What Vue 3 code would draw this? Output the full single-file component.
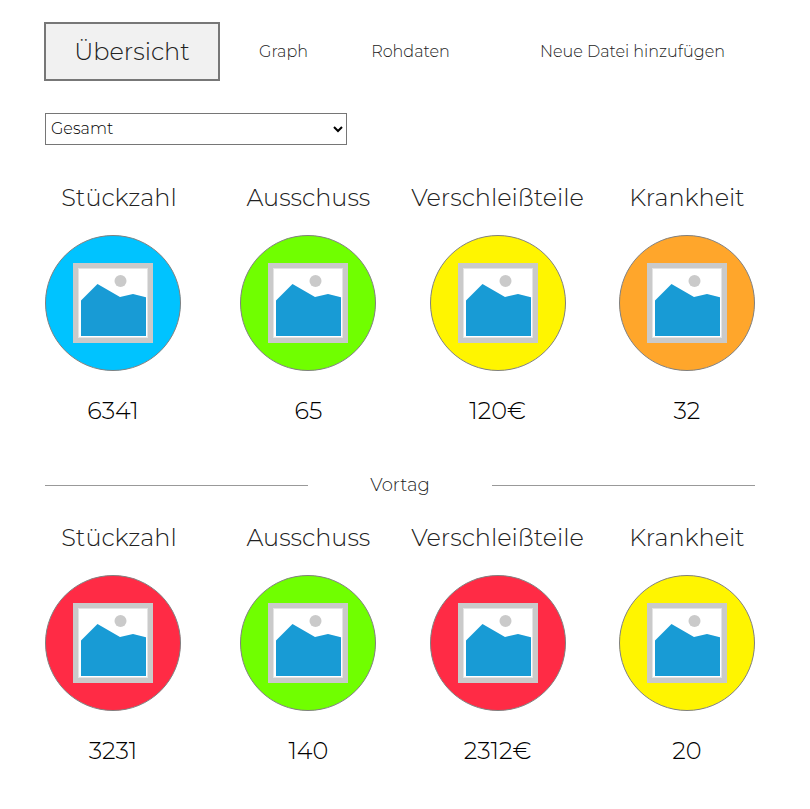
<script setup>
import { ref } from 'vue'

const tabs = ['Übersicht', 'Graph', 'Rohdaten', 'Neue Datei hinzufügen']
const activeTab = ref('Übersicht')
const range = ref('Gesamt')

const total = [
  { title: 'Stückzahl', value: '6341', tone: 'blue' },
  { title: 'Ausschuss', value: '65', tone: 'green' },
  { title: 'Verschleißteile', value: '120€', tone: 'yellow' },
  { title: 'Krankheit', value: '32', tone: 'orange' }
]
const previousDay = [
  { title: 'Stückzahl', value: '3231', tone: 'red' },
  { title: 'Ausschuss', value: '140', tone: 'green' },
  { title: 'Verschleißteile', value: '2312€', tone: 'red' },
  { title: 'Krankheit', value: '20', tone: 'yellow' }
]
const sections = [
  { id: 'total', heading: '', metrics: total },
  { id: 'previous', heading: 'Vortag', metrics: previousDay }
]
</script>

<template>
  <main class="page">
    <nav class="tabs">
      <button
        v-for="tab in tabs"
        :key="tab"
        type="button"
        class="tab"
        :class="{ active: tab === activeTab }"
        @click="activeTab = tab"
      >{{ tab }}</button>
    </nav>

    <select v-model="range" class="range" aria-label="Zeitraum">
      <option>Gesamt</option>
    </select>

    <section v-for="section in sections" :key="section.id">
      <div v-if="section.heading" class="divider">
        <span class="line"></span>
        <h2 class="heading">{{ section.heading }}</h2>
        <span class="line"></span>
      </div>
      <div class="metrics">
        <article v-for="metric in section.metrics" :key="metric.title" class="metric">
          <h3 class="title">{{ metric.title }}</h3>
          <div class="disc" :class="metric.tone">
            <svg class="picture" viewBox="0 0 80 80" aria-hidden="true">
              <rect width="80" height="80" fill="#cacaca" />
              <rect x="5" y="5" width="70" height="70" fill="#e4e4e4" />
              <rect x="6" y="6" width="68" height="68" fill="#fff" />
              <circle cx="47.500" cy="18" r="6" fill="#cacaca" />
              <path d="M8 37.500 24.500 21 47 34 60 31 73 34.200V73H8Z" fill="#189bd5" />
            </svg>
          </div>
          <p class="value">{{ metric.value }}</p>
        </article>
      </div>
    </section>
  </main>
</template>

<style>
body {
  margin: 0;
  background: #fff;
}
</style>

<style scoped>
.page {
  box-sizing: border-box;
  padding: 22px 55px 40px 45px;
  font-family: Montserrat, Inter, sans-serif;
  font-weight: 300;
  color: #222;
}

.tabs {
  display: grid;
  grid-template-columns: 176fr 127fr 127fr 281fr;
  align-items: center;
  margin-left: -1px;
}

.tab {
  height: 59px;
  padding: 0;
  border: 0;
  background: none;
  font: inherit;
  font-size: 16px;
  color: #222;
  white-space: nowrap;
  cursor: pointer;
}

.tab:last-child {
  padding-left: 36px;
}

.tab.active {
  border: 2px solid #777;
  background: #f1f1f1;
  font-size: 24px;
}

.range {
  display: block;
  box-sizing: border-box;
  width: 302px;
  max-width: 100%;
  height: 32px;
  margin: 32px 0 37px;
  padding: 0 1px 2px;
  border: 1px solid #767676;
  border-radius: 0;
  background: #fff;
  font: inherit;
  font-size: 16px;
  color: #000;
}

.metrics {
  display: grid;
  grid-template-columns: 162fr 136fr 176fr 136fr;
  gap: 33px;
}

.metric {
  display: flex;
  flex-direction: column;
  align-items: center;
  width: 100%;
}

.metric:first-child {
  width: 136px;
}

.title {
  margin: 0 0 21px;
  font-size: 24px;
  font-weight: 300;
  line-height: 32px;
  white-space: nowrap;
}

.metric:first-child .title {
  padding-left: 12px;
}

.disc {
  display: flex;
  align-items: center;
  justify-content: center;
  box-sizing: border-box;
  width: 136px;
  height: 136px;
  border: 1px solid #808080;
  border-radius: 50%;
}

.blue { background: #00c3ff; }
.green { background: #70ff00; }
.yellow { background: #fff500; }
.orange { background: #ffa62b; }
.red { background: #ff2b45; }

.picture {
  width: 80px;
  height: 80px;
}

.value {
  margin: 24px 0 0;
  font-size: 24px;
  line-height: 32px;
  color: #000;
}

.divider {
  display: grid;
  grid-template-columns: 263fr 184fr 263fr;
  align-items: center;
  margin: 46px 0 25px;
}

.line {
  height: 1px;
  background: #999;
}

.heading {
  margin: 0;
  font-size: 18px;
  font-weight: 300;
  line-height: 24px;
  text-align: center;
}
</style>
